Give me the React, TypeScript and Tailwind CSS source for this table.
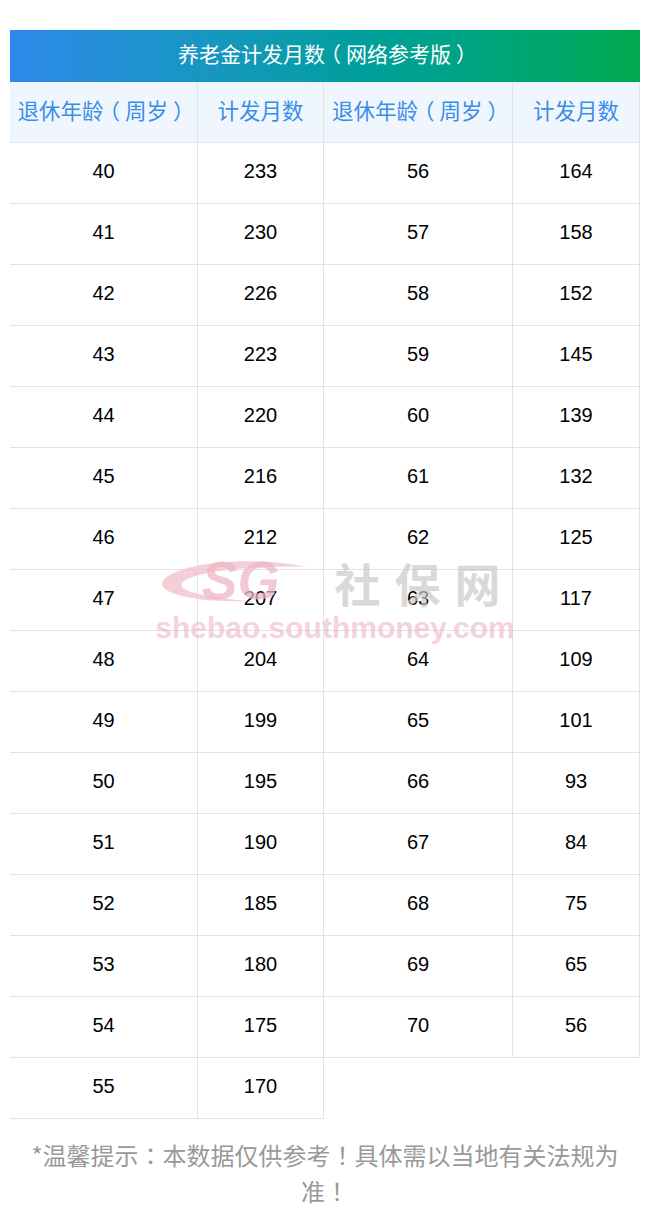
const left: [number, number][] = [
  [40, 233], [41, 230], [42, 226], [43, 223], [44, 220], [45, 216], [46, 212], [47, 207],
  [48, 204], [49, 199], [50, 195], [51, 190], [52, 185], [53, 180], [54, 175], [55, 170],
];
const right: [number, number][] = [
  [56, 164], [57, 158], [58, 152], [59, 145], [60, 139], [61, 132], [62, 125], [63, 117],
  [64, 109], [65, 101], [66, 93], [67, 84], [68, 75], [69, 65], [70, 56],
];

const cjk = { fontFamily: '"Noto Sans CJK SC", "Noto Sans", sans-serif' };
const num = { fontFamily: '"Liberation Sans", Arial, sans-serif' };
// centred full-width punctuation
const P = ({ c }: { c: string }) => <span style={{ fontFamily: '"Noto Sans CJK TC", sans-serif' }}>{c}</span>;
const Open = () => <span className="inline-block -translate-x-[5px]">（</span>;
const Close = () => <span className="inline-block translate-x-[5px]">）</span>;

function Half({ rows, a, b }: { rows: [number, number][]; a: string; b: string }) {
  return (
    <div className="flex flex-col">
      <div className="flex bg-[#f0f6fe] border-b border-[#dfe3ec] text-[#3a8ee6] text-[21.5px]" style={cjk}>
        <div className={`${a} h-[60px] pb-[4px] flex items-center justify-center border-r border-[#dfe3ec]`}>
          退休年龄<Open />周岁<Close />
        </div>
        <div className={`${b} h-[60px] pb-[4px] flex items-center justify-center border-r border-[#dfe3ec]`}>计发月数</div>
      </div>
      {rows.map(([age, m]) => (
        <div key={age} className="flex border-b border-[#dfe3ec] text-[20px] text-black" style={num}>
          <div className={`${a} h-[60px] pb-[5px] flex items-center justify-center border-r border-[#dfe3ec]`}>{age}</div>
          <div className={`${b} h-[60px] pb-[5px] flex items-center justify-center border-r border-[#dfe3ec]`}>{m}</div>
        </div>
      ))}
    </div>
  );
}

export default function App() {
  return (
    <div className="w-[650px] bg-white pt-[30px] px-[10px] pb-[20px]">
      <div
        className="h-[52px] pb-[5px] flex items-center justify-center text-white text-[21px] bg-gradient-to-r from-[#2e88ec] to-[#02a94f]"
        style={cjk}
      >
        养老金计发月数<Open />网络参考版<Close />
      </div>
      <div className="relative flex items-start">
        <Half rows={left} a="w-[188px]" b="w-[126px]" />
        <Half rows={right} a="w-[189px]" b="w-[127px]" />
        {/* watermark */}
        <div className="absolute left-[125px] top-[475px] w-[400px] flex flex-col items-center pointer-events-none select-none">
          <div className="flex items-center gap-[14px]">
            <div className="relative w-[165px] h-[50px]">
              <svg width="165" height="50" viewBox="0 0 165 50">
                <path d="M150 10 C110 0 30 2 8 22 C-4 36 40 46 90 44 C60 40 20 36 26 26 C36 14 100 8 150 10 Z" fill="#f0c3ce" opacity="0.8" />
              </svg>
              <span
                className="absolute left-[46px] top-[-4px] text-[54px] font-bold italic text-[#ecb7c4] opacity-75 leading-none"
                style={num}
              >
                SG
              </span>
            </div>
            <span className="text-[46px] font-bold text-[#c9c9c9] opacity-70 tracking-[14px] leading-none" style={cjk}>
              社保网
            </span>
          </div>
          <span className="text-[30px] font-bold text-[#efb6c4] opacity-60 leading-none mt-[6px]" style={num}>
            shebao.southmoney.com
          </span>
        </div>
      </div>
      <p className="mt-[18px] px-[20px] text-center text-[24px] leading-[36px] text-[#999999]" style={cjk}>
        *温馨提示<P c="：" />本数据仅供参考<P c="！" />具体需以当地有关法规为准<P c="！" />
      </p>
    </div>
  );
}
